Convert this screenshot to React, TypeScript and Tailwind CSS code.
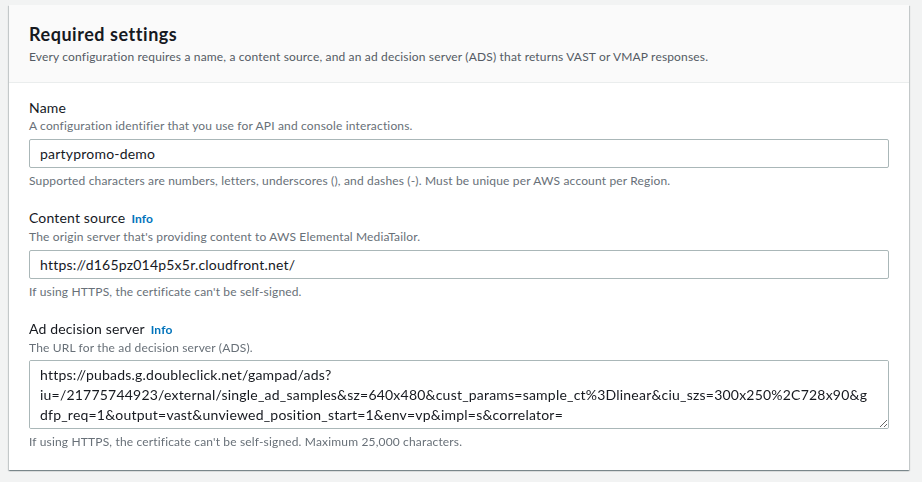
const ADS_URL =
  "https://pubads.g.doubleclick.net/gampad/ads?\niu=/21775744923/external/single_ad_samples&sz=640x480&cust_params=sample_ct%3Dlinear&ciu_szs=300x250%2C728x90&g\ndfp_req=1&output=vast&unviewed_position_start=1&env=vp&impl=s&correlator=";

function FieldLabel({ text, info }: { text: string; info?: boolean }) {
  return (
    <div className="flex items-baseline gap-[6px] text-[14px] leading-[20px] text-[#16191f]">
      <span>{text}</span>
      {info && (
        <a className="text-[12px] font-bold text-[#0073bb]" href="#">
          Info
        </a>
      )}
    </div>
  );
}

function Description({ text }: { text: string }) {
  return <p className="text-[12px] leading-[16px] text-[#687078]">{text}</p>;
}

function TextField({ value }: { value: string }) {
  return (
    <input
      className="mt-[5px] h-[29px] w-full rounded-[2px] border border-[#aab7b8] bg-white px-[10px] text-[14px] tracking-[0.015em] text-[#16191f] outline-none"
      defaultValue={value}
    />
  );
}

export default function App() {
  return (
    <div
      className="min-h-screen bg-[#f2f3f3] pl-[9px] pt-[5px] tracking-[0.01em]"
      style={{ fontFamily: "Lato, 'Liberation Sans', sans-serif" }}
    >
      <div className="w-[900px] bg-white shadow-[0_1px_1px_0_rgba(0,28,36,0.3),1px_1px_1px_0_rgba(0,28,36,0.15),-1px_1px_1px_0_rgba(0,28,36,0.15)]">
        <div className="border-b border-[#eaeded] bg-[#fafafa] px-5 pb-[17px] pt-[18px]">
          <h2 className="text-[18px] font-bold leading-[22px] tracking-[0.03em] text-[#16191f]">
            Required settings
          </h2>
          <p className="mt-[4px] text-[12px] leading-[16px] text-[#545b64]">
            Every configuration requires a name, a content source, and an ad decision server (ADS) that
            returns VAST or VMAP responses.
          </p>
        </div>

        <div className="flex flex-col gap-[19px] px-5 pb-5 pt-[15px]">
          <div>
            <FieldLabel text="Name" />
            <Description text="A configuration identifier that you use for API and console interactions." />
            <TextField value="partypromo-demo" />
            <p className="mt-[5px] text-[12px] leading-[16px] text-[#687078]">
              Supported characters are numbers, letters, underscores (), and dashes (-). Must be unique per
              AWS account per Region.
            </p>
          </div>

          <div>
            <FieldLabel text="Content source" info />
            <Description text="The origin server that's providing content to AWS Elemental MediaTailor." />
            <TextField value="https://d165pz014p5x5r.cloudfront.net/" />
            <p className="mt-[5px] text-[12px] leading-[16px] text-[#687078]">
              If using HTTPS, the certificate can't be self-signed.
            </p>
          </div>

          <div>
            <FieldLabel text="Ad decision server" info />
            <Description text="The URL for the ad decision server (ADS)." />
            <textarea
              className="mt-[4px] block h-[69px] w-full resize-y rounded-[2px] border border-[#aab7b8] bg-white px-[10px] py-[4px] text-[14px] leading-[20px] tracking-[0.015em] text-[#16191f] outline-none"
              defaultValue={ADS_URL}
            />
            <p className="mt-[5px] text-[12px] leading-[16px] text-[#687078]">
              If using HTTPS, the certificate can't be self-signed. Maximum 25,000 characters.
            </p>
          </div>
        </div>
      </div>
    </div>
  );
}
